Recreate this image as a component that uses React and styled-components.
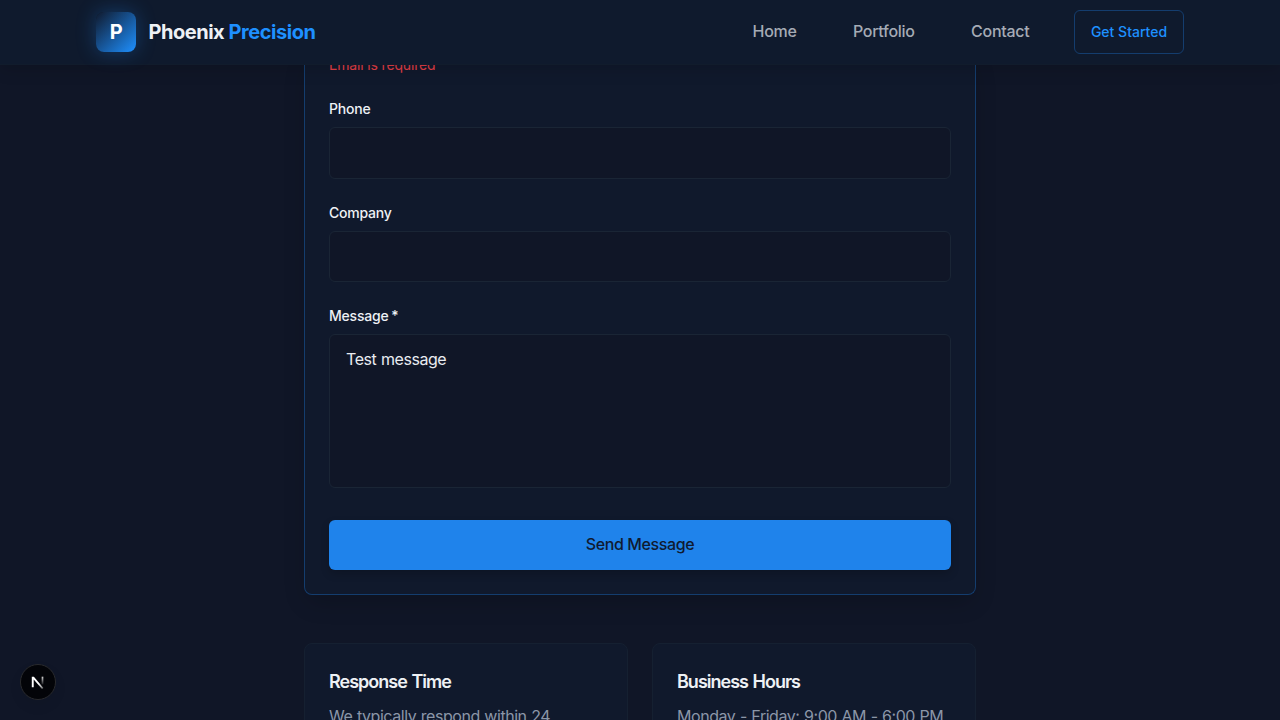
import React from "react";
import styled, { createGlobalStyle } from "styled-components";

const Global = createGlobalStyle`
  *, *::before, *::after { box-sizing: border-box; }
  html, body { margin: 0; padding: 0; background: #101627; }
  body { font-family: Inter, "Liberation Sans", sans-serif; font-size: 16px; line-height: 24px; color: #eef1f5; -webkit-font-smoothing: antialiased; }
`;

const Page = styled.div`
  height: 720px;
  overflow: hidden;
  display: flex;
  flex-direction: column;
  background: #101627;
`;

const Header = styled.header`
  position: relative;
  z-index: 10;
  flex: none;
  height: 65px;
  padding: 0 96px;
  display: flex;
  align-items: center;
  justify-content: space-between;
  background: #0f1a2d;
  border-bottom: 1px solid #111c2c;
  box-shadow: 0 4px 16px rgba(0, 0, 0, 0.15);
`;

const Brand = styled.div`
  display: flex;
  align-items: center;
  gap: 12.4px;
  font-size: 20px;
  line-height: 28px;
  font-weight: 700;
  letter-spacing: -0.46px;
`;

const Mark = styled.div`
  width: 40px;
  height: 40px;
  border-radius: 8px;
  display: grid;
  place-items: center;
  color: #fff;
  background: linear-gradient(135deg, #101a2e 0%, #1e90ff 100%);
  box-shadow: 0 0 20px rgba(30, 144, 255, 0.3);
`;

const Accent = styled.span`
  color: #1e90ff;
`;

const Nav = styled.nav`
  display: flex;
  align-items: center;
`;

const NavLink = styled.a`
  margin-right: ${(p) => (p.$last ? 44.6 : 56.3)}px;
  padding-bottom: 2px;
  color: #a5abb5;
  font-weight: 450;
  letter-spacing: -0.28px;
`;

const OutlineButton = styled.button`
  width: 110px;
  height: 44px;
  padding: 0;
  border: 1px solid #143d6e;
  border-radius: 6px;
  background: transparent;
  color: #1e90ff;
  font: 450 14px/20px Inter, sans-serif;
`;

const Main = styled.main`
  width: 672px;
  margin: -10px auto 0;
`;

const FormCard = styled.form`
  display: flex;
  flex-direction: column;
  gap: 24px;
  height: 540px;
  padding: 0 24px 24px;
  border: 1px solid #143d6e;
  border-top: 0;
  border-radius: 0 0 8px 8px;
  background: #10192c;
  box-shadow: 0 10px 24px -4px rgba(0, 0, 0, 0.2);
`;

const ErrorText = styled.p`
  margin: 0;
  color: #e03e46;
  font-size: 14px;
  line-height: 20px;
  letter-spacing: -0.16px;
`;

const Field = styled.div`
  display: flex;
  flex-direction: column;
  gap: 8px;
`;

const Label = styled.label`
  font-size: 14px;
  line-height: 20px;
  font-weight: 450;
  letter-spacing: -0.22px;
  word-spacing: -0.6px;
`;

const Input = styled.input`
  width: 100%;
  height: 51.5px;
  padding: 12px 16px;
  border: 1px solid #1a2535;
  border-radius: 6px;
  outline: none;
  background: #101627;
  color: #eef1f5;
  font: 400 16px/24px Inter, sans-serif;
`;

const TextArea = styled.textarea`
  display: block;
  width: 100%;
  height: 154px;
  padding: 12px 16px;
  border: 1px solid #1a2535;
  border-radius: 6px;
  outline: none;
  resize: none;
  background: #101627;
  color: #e9ecf1;
  font: 400 16px/24px Inter, sans-serif;
  letter-spacing: -0.45px;
  word-spacing: 0.7px;
`;

const SubmitButton = styled.button`
  width: 100%;
  height: 50px;
  margin-top: auto;
  padding: 0 0 2px;
  flex: none;
  border: 0;
  border-radius: 6px;
  background: #1f83eb;
  color: #101a30;
  font: 450 16px/24px Inter, sans-serif;
  letter-spacing: -0.38px;
  box-shadow: 0 4px 8px rgba(0, 0, 0, 0.18);
`;

const InfoGrid = styled.section`
  display: grid;
  grid-template-columns: 1fr 1fr;
  gap: 24px;
  margin-top: 48px;
`;

const InfoCard = styled.article`
  height: 130px;
  padding: 24px;
  border: 1px solid #152031;
  border-radius: 8px;
  background: #10192c;
`;

const InfoTitle = styled.h3`
  margin: 0 0 8px;
  font-size: 18px;
  line-height: 28px;
  font-weight: 600;
  letter-spacing: -1px;
  word-spacing: 1.1px;
`;

const InfoText = styled.p`
  margin: 0;
  color: #8b96a8;
  letter-spacing: -0.45px;
  word-spacing: 0.5px;
`;

const DevBadge = styled.div`
  position: fixed;
  left: 20px;
  bottom: 20px;
  width: 36px;
  height: 36px;
  border-radius: 50%;
  display: grid;
  place-items: center;
  background: #030408;
  border: 1px solid #292a2d;
  box-shadow: 0 6px 14px rgba(0, 0, 0, 0.06);
`;

function NextLogo() {
  return (
    <svg width="14" height="14" viewBox="0 0 14 14" fill="none">
      <defs>
        <linearGradient id="diag" x1="8" y1="8.5" x2="12" y2="14" gradientUnits="userSpaceOnUse">
          <stop stopColor="#fff" />
          <stop offset="1" stopColor="#fff" stopOpacity="0.35" />
        </linearGradient>
        <linearGradient id="stem" x1="11.5" y1="1" x2="11.5" y2="9.5" gradientUnits="userSpaceOnUse">
          <stop stopColor="#fff" stopOpacity="0.9" />
          <stop offset="1" stopColor="#fff" stopOpacity="0.1" />
        </linearGradient>
      </defs>
      <path d="M0.8 1.7H2.9L12.4 13L11 14L2.7 4.5V12.3H0.8Z" fill="url(#diag)" />
      <path d="M11.5 1.7V9.5" stroke="url(#stem)" strokeWidth="1.7" />
    </svg>
  );
}

export default function App() {
  return (
    <>
      <Global />
      <Page>
        <Header>
          <Brand>
            <Mark>P</Mark>
            <span>Phoenix <Accent>Precision</Accent></span>
          </Brand>
          <Nav>
            <NavLink>Home</NavLink>
            <NavLink>Portfolio</NavLink>
            <NavLink $last>Contact</NavLink>
            <OutlineButton>Get Started</OutlineButton>
          </Nav>
        </Header>
        <Main>
          <FormCard>
            <ErrorText>Email is required</ErrorText>
            <Field>
              <Label htmlFor="phone">Phone</Label>
              <Input id="phone" />
            </Field>
            <Field>
              <Label htmlFor="company">Company</Label>
              <Input id="company" />
            </Field>
            <Field>
              <Label htmlFor="message">Message *</Label>
              <TextArea id="message" defaultValue="Test message" />
            </Field>
            <SubmitButton type="button">Send Message</SubmitButton>
          </FormCard>
          <InfoGrid>
            <InfoCard>
              <InfoTitle>Response Time</InfoTitle>
              <InfoText>We typically respond within 24</InfoText>
            </InfoCard>
            <InfoCard>
              <InfoTitle>Business Hours</InfoTitle>
              <InfoText>Monday - Friday: 9:00 AM - 6:00 PM</InfoText>
            </InfoCard>
          </InfoGrid>
        </Main>
        <DevBadge><NextLogo /></DevBadge>
      </Page>
    </>
  );
}
